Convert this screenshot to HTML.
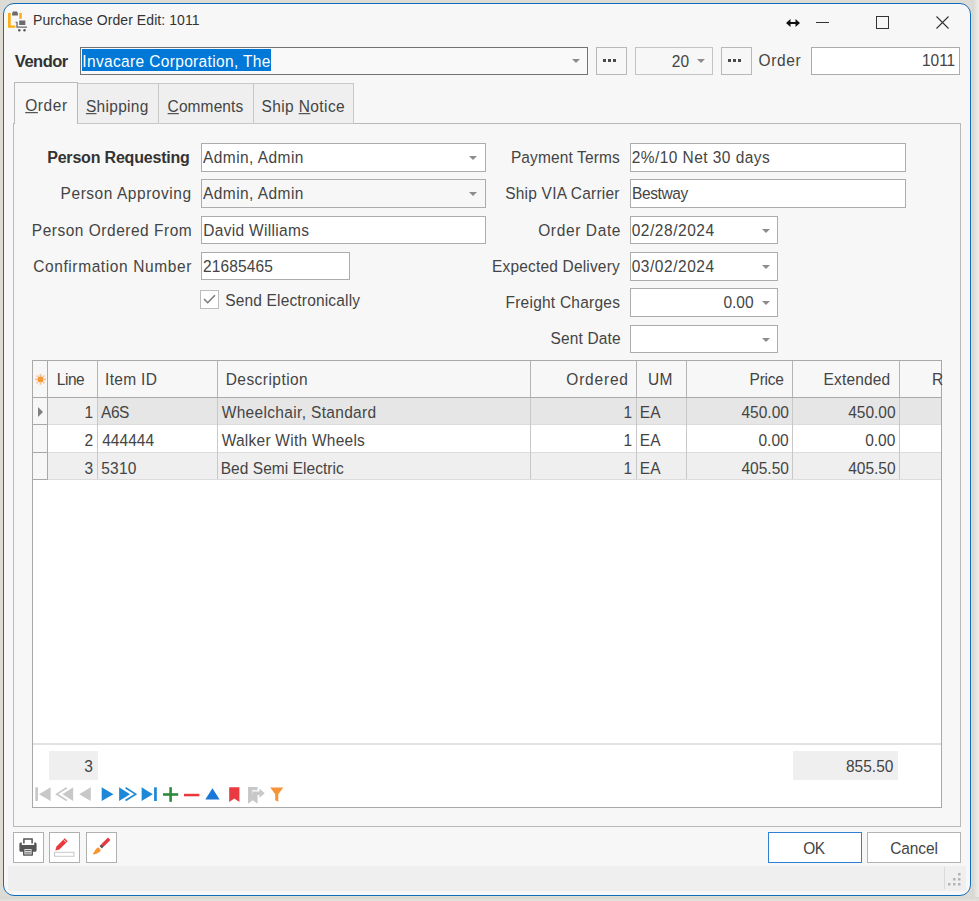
<!DOCTYPE html>
<html><head><meta charset="utf-8">
<style>
*{box-sizing:border-box;margin:0;padding:0}
html,body{width:979px;height:901px;overflow:hidden;background:#dcdbd6;font-family:"Liberation Sans",sans-serif;color:#3c3c3c}
.a{position:absolute}
.win{position:absolute;left:3px;top:3px;width:968px;height:893px;border:1px solid #0f6cbd;border-radius:11px;background:#f7f7f7;overflow:hidden;box-shadow:0 0 0 1px #e2ddd3}
.t{position:absolute;font-size:15px;white-space:nowrap;line-height:17px}
.box{position:absolute;border:1px solid #acacac;background:#fff}
.dd{position:absolute;width:0;height:0;border-left:4px solid transparent;border-right:4px solid transparent;border-top:4px solid #8c8c8c}
.btn{position:absolute;border:1px solid #b8b8b8;background:#f7f7f7}
.dots{position:absolute;height:3px;width:3px;background:#4a4a4a;box-shadow:5px 0 0 #4a4a4a,10px 0 0 #4a4a4a}
.vl{position:absolute;width:1px}
.hl{position:absolute;height:1px}
svg{position:absolute;overflow:visible}
</style></head><body>
<div class="a" style="left:972px;top:0;width:7px;height:901px;background:linear-gradient(to right,#d6d5d0,#efeee9)"></div>
<div class="a" style="left:0;top:897px;width:979px;height:4px;background:linear-gradient(to bottom,#d6d5d0,#e4e3de)"></div>
<div class="win">
  <div class="a" style="left:4px;top:862px;width:958px;height:25px;background:#efefef"></div>
  <div class="a" style="left:940px;top:863px;width:1px;height:22px;background:#dadada"></div>
</div>

<!-- title icon -->
<svg style="left:0;top:0" width="40" height="40">
  <path d="M8 13h2.7v12.5h4.6v2.2H8z" fill="#fbae17"/>
  <path d="M19.2 13h2.6v5.8h-2.6z" fill="#fbae17"/>
  <path d="M13 11.6h4l0.9 1.6v2.3h-5.8v-2.3z" fill="#6b6b6b"/>
  <path d="M15.6 22.3h1.4v4.8h10" fill="none" stroke="#6b6b6b" stroke-width="1.3"/>
  <rect x="19.2" y="20.5" width="6.1" height="4.5" fill="#6b6b6b"/>
  <circle cx="19.3" cy="30.3" r="1.2" fill="#555"/>
  <circle cx="24.5" cy="30.3" r="1.2" fill="#555"/>
</svg>
<!-- caption buttons -->
<svg style="left:0;top:0" width="979" height="40">
  <path d="M787 23h12" stroke="#111" stroke-width="2"/>
  <path d="M786 23l4.5-4v8z M800 23l-4.5-4v8z" fill="#111"/>
  <path d="M816 22.5h13" stroke="#333" stroke-width="1"/>
  <rect x="876.5" y="16.5" width="12" height="12" fill="none" stroke="#333" stroke-width="1"/>
  <path d="M936.5 16.5l12 12M948.5 16.5l-12 12" stroke="#333" stroke-width="1.1"/>
</svg>

<!-- vendor row -->
<div class="box" style="left:80px;top:47px;width:508px;height:28px;border-color:#737373;background:#f9f9f9"></div>
<div class="a" style="left:82px;top:49px;width:189px;height:22px;background:#0078d7"></div>
<div class="dd" style="left:572px;top:59px"></div>
<div class="btn" style="left:596px;top:47px;width:31px;height:28px"></div>
<div class="dots" style="left:603px;top:59px"></div>
<div class="btn" style="left:635px;top:47px;width:78px;height:28px;border-color:#c4c4c4"></div>
<div class="dd" style="left:697px;top:59px"></div>
<div class="btn" style="left:721px;top:47px;width:31px;height:28px"></div>
<div class="dots" style="left:728px;top:59px"></div>
<div class="box" style="left:811px;top:47px;width:149px;height:28px"></div>

<!-- panel -->
<div class="a" style="left:13px;top:123px;width:948px;height:704px;border:1px solid #b9b9b9;background:#f7f7f7"></div>
<!-- tabs -->
<div class="a" style="left:77px;top:83px;width:82px;height:41px;border:1px solid #c8c8c8;background:#efefef"></div>
<div class="a" style="left:158px;top:83px;width:96px;height:41px;border:1px solid #c8c8c8;background:#efefef"></div>
<div class="a" style="left:253px;top:83px;width:101px;height:41px;border:1px solid #c8c8c8;background:#efefef"></div>
<div class="a" style="left:14px;top:82px;width:64px;height:42px;border:1px solid #b9b9b9;border-bottom:none;background:#f7f7f7"></div>

<!-- left form -->
<div class="box" style="left:201px;top:143px;width:285px;height:29px"></div>
<div class="dd" style="left:469px;top:156px"></div>
<div class="box" style="left:201px;top:179px;width:285px;height:29px;background:#f7f7f7"></div>
<div class="dd" style="left:469px;top:192px"></div>
<div class="box" style="left:201px;top:216px;width:285px;height:28px"></div>
<div class="box" style="left:201px;top:252px;width:149px;height:28px"></div>
<div class="box" style="left:200px;top:290px;width:19px;height:19px;border-color:#bcbcbc;background:#fff"></div>
<svg style="left:0;top:0" width="1" height="1"><path d="M204 299l3.7 3.7l7.2-7.5" fill="none" stroke="#7c7c7c" stroke-width="1.6"/></svg>

<!-- right form -->
<div class="box" style="left:630px;top:143px;width:276px;height:29px"></div>
<div class="box" style="left:630px;top:179px;width:276px;height:29px"></div>
<div class="box" style="left:630px;top:216px;width:148px;height:28px"></div>
<div class="dd" style="left:762px;top:229px"></div>
<div class="box" style="left:630px;top:252px;width:148px;height:29px"></div>
<div class="dd" style="left:762px;top:265px"></div>
<div class="box" style="left:630px;top:288px;width:148px;height:29px"></div>
<div class="dd" style="left:762px;top:301px"></div>
<div class="box" style="left:630px;top:325px;width:148px;height:28px"></div>
<div class="dd" style="left:762px;top:338px"></div>

<!-- grid -->
<div class="a" style="left:32px;top:360px;width:910px;height:448px;border:1px solid #a9a9a9;background:#fff"></div>
<div class="a" style="left:33px;top:361px;width:908px;height:36px;background:#f7f7f7"></div>
<div class="hl" style="left:33px;top:397px;width:908px;background:#a9a9a9"></div>
<div class="a" style="left:48px;top:398px;width:893px;height:26px;background:#e6e6e6"></div>
<div class="a" style="left:48px;top:398px;width:49px;height:26px;background:#efefef"></div>
<div class="a" style="left:33px;top:398px;width:14px;height:26px;background:#f7f7f7"></div>
<div class="hl" style="left:48px;top:424px;width:893px;background:#dcdcdc"></div>
<div class="hl" style="left:33px;top:424px;width:14px;background:#a9a9a9"></div>
<div class="a" style="left:48px;top:425px;width:893px;height:27px;background:#ffffff"></div>
<div class="a" style="left:33px;top:425px;width:14px;height:27px;background:#f7f7f7"></div>
<div class="hl" style="left:48px;top:452px;width:893px;background:#dcdcdc"></div>
<div class="hl" style="left:33px;top:452px;width:14px;background:#a9a9a9"></div>
<div class="a" style="left:48px;top:453px;width:893px;height:26px;background:#efefef"></div>
<div class="a" style="left:33px;top:453px;width:14px;height:26px;background:#f7f7f7"></div>
<div class="hl" style="left:48px;top:479px;width:893px;background:#dcdcdc"></div>
<div class="hl" style="left:33px;top:479px;width:14px;background:#a9a9a9"></div>
<div class="vl" style="left:47px;top:361px;height:119px;background:#a9a9a9"></div>
<div class="vl" style="left:97px;top:361px;height:36px;background:#b4b4b4"></div>
<div class="vl" style="left:97px;top:398px;height:81px;background:#c8c8c8"></div>
<div class="vl" style="left:217px;top:361px;height:36px;background:#b4b4b4"></div>
<div class="vl" style="left:217px;top:398px;height:81px;background:#c8c8c8"></div>
<div class="vl" style="left:530px;top:361px;height:36px;background:#b4b4b4"></div>
<div class="vl" style="left:530px;top:398px;height:81px;background:#c8c8c8"></div>
<div class="vl" style="left:636px;top:361px;height:36px;background:#b4b4b4"></div>
<div class="vl" style="left:636px;top:398px;height:81px;background:#c8c8c8"></div>
<div class="vl" style="left:686px;top:361px;height:36px;background:#b4b4b4"></div>
<div class="vl" style="left:686px;top:398px;height:81px;background:#c8c8c8"></div>
<div class="vl" style="left:792px;top:361px;height:36px;background:#b4b4b4"></div>
<div class="vl" style="left:792px;top:398px;height:81px;background:#c8c8c8"></div>
<div class="vl" style="left:899px;top:361px;height:36px;background:#b4b4b4"></div>
<div class="vl" style="left:899px;top:398px;height:81px;background:#c8c8c8"></div>
<svg style="left:0;top:0" width="1" height="1"><g transform="translate(40.5 379.4)"><rect x="-2.6" y="-2.6" width="5.2" height="5.2" fill="#f99a3a"/><g fill="#f99a3a" opacity="0.55"><rect x="-1" y="-5.4" width="2" height="3"/><rect x="-1" y="2.4" width="2" height="3"/><rect x="-5.4" y="-1" width="3" height="2"/><rect x="2.4" y="-1" width="3" height="2"/></g><g fill="#f99a3a" opacity="0.6"><circle cx="-3.3" cy="-3.3" r="0.9"/><circle cx="3.3" cy="-3.3" r="0.9"/><circle cx="-3.3" cy="3.3" r="0.9"/><circle cx="3.3" cy="3.3" r="0.9"/></g></g></svg>
<svg style="left:0;top:0" width="1" height="1"><path d="M38 407v10l5-5z" fill="#808080"/></svg>
<div class="hl" style="left:33px;top:743px;width:908px;height:2px;background:#e2e2e2"></div>
<div class="a" style="left:49px;top:751px;width:49px;height:29px;background:#efefef"></div>
<div class="a" style="left:793px;top:751px;width:105px;height:29px;background:#efefef"></div>
<svg style="left:0;top:0" width="1" height="1">
<rect x="35.3" y="787.3" width="2.7" height="13.7" fill="#c8c8c8"/>
<path d="M50.6 787.3v13.7l-11.6-6.85z" fill="#c8c8c8"/>
<path d="M73.2 787.3v13.7l-10.8-6.85z" fill="#c8c8c8"/>
<path d="M66.8 787.8l-10 6.35l10 6.35" fill="none" stroke="#c8c8c8" stroke-width="1.7"/>
<path d="M90.8 787.3v13.7l-11.6-6.85z" fill="#c8c8c8"/>
<path d="M101.7 787.3v13.7l11.7-6.85z" fill="#1e88d8"/>
<path d="M119.1 787.3v13.7l10.9-6.85z" fill="#1e88d8"/>
<path d="M125.6 787.8l10 6.35l-10 6.35" fill="none" stroke="#1e88d8" stroke-width="1.7"/>
<path d="M141.6 787.3v13.7l11.2-6.85z" fill="#1e88d8"/>
<rect x="154.1" y="787.3" width="2.7" height="13.7" fill="#1e88d8"/>
<rect x="163" y="793.2" width="15.2" height="2.6" fill="#2e8b3e"/>
<rect x="169.3" y="787.2" width="2.6" height="14.6" fill="#2e8b3e"/>
<rect x="184" y="793.8" width="15.4" height="2.5" fill="#e8373d"/>
<path d="M205.3 799.6h14.3l-7.15-11.3z" fill="#1a78d8"/>
<path d="M229.2 787.2h10.2v14.8l-5.1-3.6l-5.1 3.6z" fill="#e83a3f"/>
<path d="M248 787h9.6v3.2h-5.4v4.4h5.4v9.1l-4.8-3.4l-4.8 3.4z" fill="#c8c8c8"/>
<path d="M252.4 791.4h7v-2.8l5.3 4.6l-5.3 4.6v-2.8h-7z" fill="#c8c8c8"/>
<path d="M270.2 787.6h13.1l-5 6.6v7.6l-3.1-1.6v-6z" fill="#f7943a"/>
</svg>

<!-- bottom buttons -->
<div class="box" style="left:13px;top:832px;width:31px;height:31px;border-color:#b0b0b0"></div>
<div class="box" style="left:49px;top:832px;width:31px;height:31px;border-color:#b0b0b0"></div>
<div class="box" style="left:86px;top:832px;width:31px;height:31px;border-color:#b0b0b0"></div>
<svg style="left:0;top:0" width="1" height="1">
  <!-- printer -->
  <path d="M23.9 843.4V839.1H32.1V843.4" fill="none" stroke="#555" stroke-width="1.5"/>
  <path d="M19.4 844a1.6 1.6 0 0 1 1.2-1.6h1.2v2.6h12.4v-2.6h1.2a1.6 1.6 0 0 1 1.2 1.6v6.2a1.6 1.6 0 0 1-1.6 1.6H21a1.6 1.6 0 0 1-1.6-1.6z" fill="#555"/>
  <rect x="23" y="847.6" width="10" height="8.2" rx="0.8" fill="#555"/>
  <rect x="24.4" y="849" width="7.2" height="5.4" fill="#dcdcdc"/>
  <rect x="25.2" y="850" width="5.6" height="1" fill="#666"/>
  <rect x="25.2" y="852.4" width="5.6" height="1" fill="#666"/>
  <!-- pencil -->
  <path d="M55.3 850.5l1.2-4l8.2-8.2l2.9 2.9l-8.2 8.2z" fill="#e8373d"/><path d="M63.4 839.6l2.9 2.9" stroke="#fff" stroke-width="0.8"/>
  <rect x="54.5" y="852.3" width="19.5" height="4" fill="#fff" stroke="#c8c8c8" stroke-width="1"/>
  <!-- brush -->
  <path d="M101 844.5l7-7l2.4 2.4l-7 7z" fill="#e8373d"/>
  <path d="M99.5 846l1.6-1.6l2.4 2.4l-1.6 1.6z" fill="#555"/>
  <path d="M98.2 847.2l2.6 2.6c-1 2.8-3.6 4.4-8.2 4.8c1.4-2.4 2.6-5.8 5.6-7.4z" fill="#f7962c"/>
</svg>
<!-- ok/cancel -->
<div class="a" style="left:768px;top:832px;width:94px;height:31px;border:1px solid #2f7fd3;background:#fff"></div>
<div class="box" style="left:867px;top:832px;width:94px;height:31px;border-color:#b4b4b4"></div>
<!-- grip -->
<svg style="left:0;top:0" width="1" height="1"><rect x="958" y="873" width="2.5" height="2.5" fill="#b4b4b4"/><rect x="953" y="878" width="2.5" height="2.5" fill="#b4b4b4"/><rect x="958" y="878" width="2.5" height="2.5" fill="#b4b4b4"/><rect x="948" y="883" width="2.5" height="2.5" fill="#b4b4b4"/><rect x="953" y="883" width="2.5" height="2.5" fill="#b4b4b4"/><rect x="958" y="883" width="2.5" height="2.5" fill="#b4b4b4"/></svg>
<div class="t" style="left:33.10px;top:12px;font-size:14px;font-weight:normal;letter-spacing:0.071px;color:#333">Purchase Order Edit: 1011</div>
<div class="t" style="left:14.80px;top:53px;font-size:16.5px;font-weight:bold;letter-spacing:-0.500px;color:#333">Vendor</div>
<div class="t" style="left:82.30px;top:53px;font-size:15.5px;font-weight:normal;letter-spacing:0.346px;color:#fff;transform:scaleY(1.1);transform-origin:0 14px">Invacare Corporation, The</div>
<div class="t" style="left:671.80px;top:53px;font-size:15.5px;font-weight:normal;letter-spacing:0.000px;color:#444;transform:scaleY(1.1);transform-origin:0 14px">20</div>
<div class="t" style="left:758.60px;top:52px;font-size:15.5px;font-weight:normal;letter-spacing:0.600px;color:#444;transform:scaleY(1.1);transform-origin:0 14px">Order</div>
<div class="t" style="left:921.90px;top:52px;font-size:15.5px;font-weight:normal;letter-spacing:0.000px;color:#444;transform:scaleY(1.1);transform-origin:0 14px">1011</div>
<div class="t" style="left:25.20px;top:97px;font-size:15.5px;font-weight:normal;letter-spacing:0.600px;color:#444;transform:scaleY(1.1);transform-origin:0 14px"><u>O</u>rder</div>
<div class="t" style="left:85.90px;top:98px;font-size:15.5px;font-weight:normal;letter-spacing:0.314px;color:#444;transform:scaleY(1.1);transform-origin:0 14px"><u>S</u>hipping</div>
<div class="t" style="left:167.60px;top:98px;font-size:15.5px;font-weight:normal;letter-spacing:0.100px;color:#444;transform:scaleY(1.1);transform-origin:0 14px"><u>C</u>omments</div>
<div class="t" style="left:261.40px;top:98px;font-size:15.5px;font-weight:normal;letter-spacing:0.400px;color:#444;transform:scaleY(1.1);transform-origin:0 14px">Ship <u>N</u>otice</div>
<div class="t" style="left:47.20px;top:149px;font-size:16px;font-weight:bold;letter-spacing:-0.194px;color:#333">Person Requesting</div>
<div class="t" style="left:60.60px;top:185px;font-size:15.5px;font-weight:normal;letter-spacing:0.540px;color:#444;transform:scaleY(1.1);transform-origin:0 14px">Person Approving</div>
<div class="t" style="left:31.80px;top:222px;font-size:15.5px;font-weight:normal;letter-spacing:0.511px;color:#444;transform:scaleY(1.1);transform-origin:0 14px">Person Ordered From</div>
<div class="t" style="left:33.20px;top:258px;font-size:15.5px;font-weight:normal;letter-spacing:0.600px;color:#444;transform:scaleY(1.1);transform-origin:0 14px">Confirmation Number</div>
<div class="t" style="left:203.00px;top:149px;font-size:15.5px;font-weight:normal;letter-spacing:0.436px;color:#444;transform:scaleY(1.1);transform-origin:0 14px">Admin, Admin</div>
<div class="t" style="left:203.00px;top:185px;font-size:15.5px;font-weight:normal;letter-spacing:0.436px;color:#444;transform:scaleY(1.1);transform-origin:0 14px">Admin, Admin</div>
<div class="t" style="left:203.30px;top:222px;font-size:15.5px;font-weight:normal;letter-spacing:0.308px;color:#444;transform:scaleY(1.1);transform-origin:0 14px">David Williams</div>
<div class="t" style="left:203.00px;top:258px;font-size:15.5px;font-weight:normal;letter-spacing:0.129px;color:#444;transform:scaleY(1.1);transform-origin:0 14px">21685465</div>
<div class="t" style="left:225.20px;top:292px;font-size:15.5px;font-weight:normal;letter-spacing:0.167px;color:#444;transform:scaleY(1.1);transform-origin:0 14px">Send Electronically</div>
<div class="t" style="left:510.90px;top:149px;font-size:15.5px;font-weight:normal;letter-spacing:0.125px;color:#444;transform:scaleY(1.1);transform-origin:0 14px">Payment Terms</div>
<div class="t" style="left:505.20px;top:185px;font-size:15.5px;font-weight:normal;letter-spacing:0.213px;color:#444;transform:scaleY(1.1);transform-origin:0 14px">Ship VIA Carrier</div>
<div class="t" style="left:538.20px;top:222px;font-size:15.5px;font-weight:normal;letter-spacing:0.622px;color:#444;transform:scaleY(1.1);transform-origin:0 14px">Order Date</div>
<div class="t" style="left:492.10px;top:258px;font-size:15.5px;font-weight:normal;letter-spacing:0.169px;color:#444;transform:scaleY(1.1);transform-origin:0 14px">Expected Delivery</div>
<div class="t" style="left:505.50px;top:294px;font-size:15.5px;font-weight:normal;letter-spacing:0.236px;color:#444;transform:scaleY(1.1);transform-origin:0 14px">Freight Charges</div>
<div class="t" style="left:550.40px;top:330px;font-size:15.5px;font-weight:normal;letter-spacing:0.175px;color:#444;transform:scaleY(1.1);transform-origin:0 14px">Sent Date</div>
<div class="t" style="left:631.70px;top:149px;font-size:15.5px;font-weight:normal;letter-spacing:0.444px;color:#444;transform:scaleY(1.1);transform-origin:0 14px">2%/10 Net 30 days</div>
<div class="t" style="left:632.00px;top:185px;font-size:15.5px;font-weight:normal;letter-spacing:-0.383px;color:#444;transform:scaleY(1.1);transform-origin:0 14px">Bestway</div>
<div class="t" style="left:631.70px;top:222px;font-size:15.5px;font-weight:normal;letter-spacing:0.533px;color:#444;transform:scaleY(1.1);transform-origin:0 14px">02/28/2024</div>
<div class="t" style="left:631.70px;top:258px;font-size:15.5px;font-weight:normal;letter-spacing:0.533px;color:#444;transform:scaleY(1.1);transform-origin:0 14px">03/02/2024</div>
<div class="t" style="left:723.40px;top:294px;font-size:15.5px;font-weight:normal;letter-spacing:0.000px;color:#444;transform:scaleY(1.1);transform-origin:0 14px">0.00</div>
<div class="t" style="left:56.85px;top:371px;font-size:15.5px;font-weight:normal;letter-spacing:-0.500px;color:#444;transform:scaleY(1.1);transform-origin:0 14px">Line</div>
<div class="t" style="left:105.10px;top:371px;font-size:15.5px;font-weight:normal;letter-spacing:0.300px;color:#444;transform:scaleY(1.1);transform-origin:0 14px">Item ID</div>
<div class="t" style="left:225.70px;top:371px;font-size:15.5px;font-weight:normal;letter-spacing:0.450px;color:#444;transform:scaleY(1.1);transform-origin:0 14px">Description</div>
<div class="t" style="left:566.30px;top:371px;font-size:15.5px;font-weight:normal;letter-spacing:0.800px;color:#444;transform:scaleY(1.1);transform-origin:0 14px">Ordered</div>
<div class="t" style="left:648.10px;top:371px;font-size:15.5px;font-weight:normal;letter-spacing:0.200px;color:#444;transform:scaleY(1.1);transform-origin:0 14px">UM</div>
<div class="t" style="left:749.60px;top:371px;font-size:15.5px;font-weight:normal;letter-spacing:-0.250px;color:#444;transform:scaleY(1.1);transform-origin:0 14px">Price</div>
<div class="t" style="left:823.60px;top:371px;font-size:15.5px;font-weight:normal;letter-spacing:0.143px;color:#444;transform:scaleY(1.1);transform-origin:0 14px">Extended</div>
<div class="t" style="left:932.00px;top:371px;font-size:15.5px;font-weight:normal;letter-spacing:0.000px;color:#444;transform:scaleY(1.1);transform-origin:0 14px">R</div>
<div class="t" style="left:84.40px;top:404px;font-size:15.5px;font-weight:normal;letter-spacing:0.000px;color:#444;transform:scaleY(1.1);transform-origin:0 14px">1</div>
<div class="t" style="left:101.10px;top:404px;font-size:15.5px;font-weight:normal;letter-spacing:-0.500px;color:#444;transform:scaleY(1.1);transform-origin:0 14px">A6S</div>
<div class="t" style="left:221.70px;top:404px;font-size:15.5px;font-weight:normal;letter-spacing:0.332px;color:#444;transform:scaleY(1.1);transform-origin:0 14px">Wheelchair, Standard</div>
<div class="t" style="left:623.40px;top:404px;font-size:15.5px;font-weight:normal;letter-spacing:0.000px;color:#444;transform:scaleY(1.1);transform-origin:0 14px">1</div>
<div class="t" style="left:639.80px;top:404px;font-size:15.5px;font-weight:normal;letter-spacing:0.000px;color:#444;transform:scaleY(1.1);transform-origin:0 14px">EA</div>
<div class="t" style="left:741.50px;top:404px;font-size:15.5px;font-weight:normal;letter-spacing:0.000px;color:#444;transform:scaleY(1.1);transform-origin:0 14px">450.00</div>
<div class="t" style="left:848.20px;top:404px;font-size:15.5px;font-weight:normal;letter-spacing:0.000px;color:#444;transform:scaleY(1.1);transform-origin:0 14px">450.00</div>
<div class="t" style="left:84.40px;top:432px;font-size:15.5px;font-weight:normal;letter-spacing:0.000px;color:#444;transform:scaleY(1.1);transform-origin:0 14px">2</div>
<div class="t" style="left:102.20px;top:432px;font-size:15.5px;font-weight:normal;letter-spacing:0.040px;color:#444;transform:scaleY(1.1);transform-origin:0 14px">444444</div>
<div class="t" style="left:221.70px;top:432px;font-size:15.5px;font-weight:normal;letter-spacing:0.247px;color:#444;transform:scaleY(1.1);transform-origin:0 14px">Walker With Wheels</div>
<div class="t" style="left:623.40px;top:432px;font-size:15.5px;font-weight:normal;letter-spacing:0.000px;color:#444;transform:scaleY(1.1);transform-origin:0 14px">1</div>
<div class="t" style="left:639.80px;top:432px;font-size:15.5px;font-weight:normal;letter-spacing:0.000px;color:#444;transform:scaleY(1.1);transform-origin:0 14px">EA</div>
<div class="t" style="left:758.50px;top:432px;font-size:15.5px;font-weight:normal;letter-spacing:0.000px;color:#444;transform:scaleY(1.1);transform-origin:0 14px">0.00</div>
<div class="t" style="left:865.20px;top:432px;font-size:15.5px;font-weight:normal;letter-spacing:0.000px;color:#444;transform:scaleY(1.1);transform-origin:0 14px">0.00</div>
<div class="t" style="left:84.40px;top:460px;font-size:15.5px;font-weight:normal;letter-spacing:0.000px;color:#444;transform:scaleY(1.1);transform-origin:0 14px">3</div>
<div class="t" style="left:101.20px;top:460px;font-size:15.5px;font-weight:normal;letter-spacing:0.267px;color:#444;transform:scaleY(1.1);transform-origin:0 14px">5310</div>
<div class="t" style="left:220.70px;top:460px;font-size:15.5px;font-weight:normal;letter-spacing:0.050px;color:#444;transform:scaleY(1.1);transform-origin:0 14px">Bed Semi Electric</div>
<div class="t" style="left:623.40px;top:460px;font-size:15.5px;font-weight:normal;letter-spacing:0.000px;color:#444;transform:scaleY(1.1);transform-origin:0 14px">1</div>
<div class="t" style="left:639.80px;top:460px;font-size:15.5px;font-weight:normal;letter-spacing:0.000px;color:#444;transform:scaleY(1.1);transform-origin:0 14px">EA</div>
<div class="t" style="left:741.50px;top:460px;font-size:15.5px;font-weight:normal;letter-spacing:0.000px;color:#444;transform:scaleY(1.1);transform-origin:0 14px">405.50</div>
<div class="t" style="left:848.20px;top:460px;font-size:15.5px;font-weight:normal;letter-spacing:0.000px;color:#444;transform:scaleY(1.1);transform-origin:0 14px">405.50</div>
<div class="t" style="left:84.20px;top:758px;font-size:15.5px;font-weight:normal;letter-spacing:0.000px;color:#444;transform:scaleY(1.1);transform-origin:0 14px">3</div>
<div class="t" style="left:846.00px;top:758px;font-size:15.5px;font-weight:normal;letter-spacing:0.000px;color:#444;transform:scaleY(1.1);transform-origin:0 14px">855.50</div>
<div class="t" style="left:803.15px;top:840px;font-size:15.5px;font-weight:normal;letter-spacing:-0.500px;color:#444;transform:scaleY(1.1);transform-origin:0 14px">OK</div>
<div class="t" style="left:890.20px;top:840px;font-size:15.5px;font-weight:normal;letter-spacing:-0.120px;color:#444;transform:scaleY(1.1);transform-origin:0 14px">Cancel</div>
</body></html>
